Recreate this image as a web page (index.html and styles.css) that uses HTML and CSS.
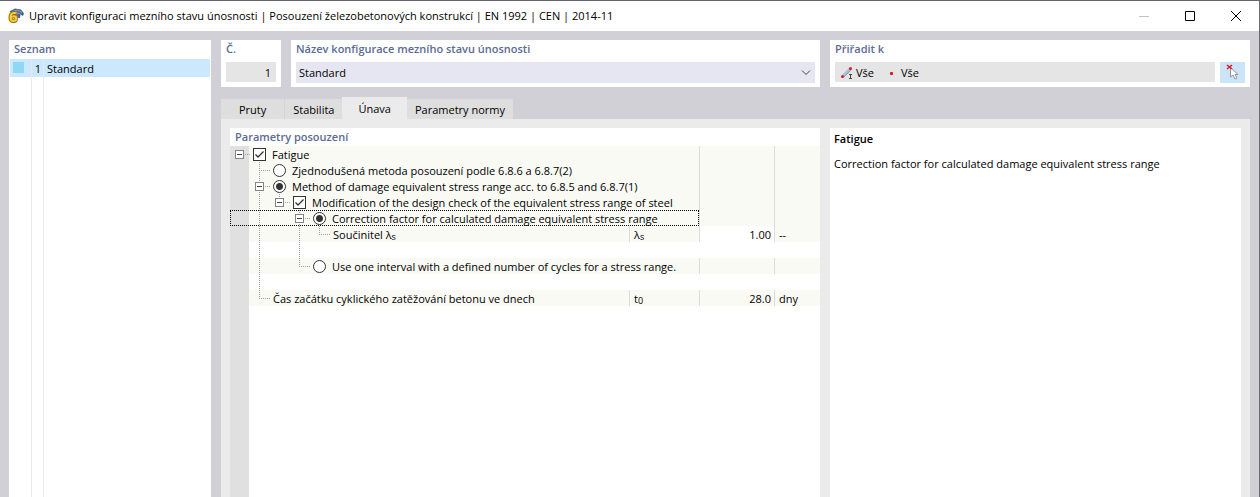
FILE: index.html
```
<!DOCTYPE html>
<html lang="cs">

<head>
    <meta charset="UTF-8">
    <meta name="viewport" content="width=device-width, initial-scale=1.0">
    <title>Upravit konfiguraci mezního stavu únosnosti</title>
    <link rel="stylesheet" href="styles.css">
</head>

<body>
    <header class="titlebar">
        <svg class="app-icon" width="16" height="16" viewBox="0 0 16 16" aria-hidden="true">
            <path d="M1.500 3.500L7 0.500L13 1.500L16 5.500L15 8L12.500 6.500L12 10H9.500L8.500 5L4 5.500Z" fill="#456590" />
            <path d="M4 4L9 2L14 4.500M9 5L12.500 6" fill="none" stroke="#8fa9cc" />
            <text x="1" y="14" class="app-six">6</text>
        </svg>
        <h1>Upravit konfiguraci mezního stavu únosnosti | Posouzení železobetonových konstrukcí | EN 1992 | CEN | 2014-11</h1>
        <div class="window-buttons">
            <button type="button" aria-label="Minimalizovat" disabled>
                <svg width="10" height="10" viewBox="0 0 10 10"><path d="M0 5.5H10" stroke="#c4c4c4" /></svg>
            </button>
            <button type="button" aria-label="Maximalizovat">
                <svg width="10" height="10" viewBox="0 0 10 10"><path d="M.5 .5H9.5V9.5H.5Z" fill="none" stroke="#000" /></svg>
            </button>
            <button type="button" aria-label="Zavřít">
                <svg width="10" height="10" viewBox="0 0 10 10"><path d="M0 0L10 10M10 0L0 10" stroke="#000" /></svg>
            </button>
        </div>
    </header>

    <div class="dialog">
        <aside class="panel list-panel">
            <h2>Seznam</h2>
            <ul class="list">
                <li class="selected">
                    <span class="list-color"><span class="swatch"></span></span>
                    <span class="list-no">1</span>
                    <span class="list-name">Standard</span>
                </li>
            </ul>
        </aside>

        <main>
            <div class="top">
                <section class="panel">
                    <h2><label for="no">Č.</label></h2>
                    <div class="fields">
                        <input type="text" id="no" class="field number" value="1" readonly>
                    </div>
                </section>
                <section class="panel">
                    <h2><label for="name">Název konfigurace mezního stavu únosnosti</label></h2>
                    <div class="fields">
                        <select id="name" class="field combo">
                            <option>Standard</option>
                        </select>
                    </div>
                </section>
                <section class="panel">
                    <h2>Přiřadit k</h2>
                    <div class="fields">
                        <div class="field assigned">
                            <svg width="12" height="12" viewBox="0 0 12 12" aria-hidden="true">
                                <path d="M2 9L9 2" stroke="#a9c0de" stroke-width="3" />
                                <path d="M3 10L10 3" stroke="#8496b0" stroke-width="1" />
                                <circle cx="1.5" cy="9.5" r="1.5" fill="#d8181e" />
                                <circle cx="9.5" cy="1.5" r="1.5" fill="#d8181e" />
                                <path d="M8 7.5H11M9.5 7V11M8 11.5H11" stroke="#444" />
                            </svg>
                            <span>Vše</span>
                            <span class="node"></span>
                            <span>Vše</span>
                        </div>
                        <button type="button" class="pick" aria-label="Vybrat v grafice">
                            <svg width="14" height="16" viewBox="0 0 14 16">
                                <path d="M4.500 3.500V13L7 11L9 15L11 14L9 10.500H12Z" fill="#fff" stroke="#8d959d" />
                                <path d="M1 1L6 5M6 1L1 5" stroke="#e0181e" stroke-width="1.500" />
                            </svg>
                        </button>
                    </div>
                </section>
            </div>

            <div class="tabs" role="tablist">
                <button type="button" role="tab">Pruty</button>
                <button type="button" role="tab">Stabilita</button>
                <button type="button" role="tab" class="active" aria-selected="true">Únava</button>
                <button type="button" role="tab">Parametry normy</button>
            </div>

            <div class="page">
                <section class="panel params">
                    <h2>Parametry posouzení</h2>
                    <div class="tree">
                        <table>
                            <colgroup>
                                <col>
                                <col class="col-symbol">
                                <col class="col-value">
                                <col class="col-unit">
                            </colgroup>
                            <tr>
                                <td colspan="2">
                                    <div class="node-row">
                                        <span class="guide side"><button type="button" class="toggle" aria-label="Sbalit"></button></span>
                                        <input type="checkbox" id="fatigue" checked>
                                        <label for="fatigue">Fatigue</label>
                                    </div>
                                </td>
                                <td></td>
                                <td></td>
                            </tr>
                            <tr>
                                <td colspan="2">
                                    <div class="node-row">
                                        <span class="guide"></span>
                                        <span class="guide down side"></span>
                                        <input type="radio" name="method" id="simple">
                                        <label for="simple">Zjednodušená metoda posouzení podle 6.8.6 a 6.8.7(2)</label>
                                    </div>
                                </td>
                                <td></td>
                                <td></td>
                            </tr>
                            <tr>
                                <td colspan="2">
                                    <div class="node-row">
                                        <span class="guide"></span>
                                        <span class="guide down side"><button type="button" class="toggle" aria-label="Sbalit"></button></span>
                                        <input type="radio" name="method" id="damage" checked>
                                        <label for="damage">Method of damage equivalent stress range acc. to 6.8.5 and 6.8.7(1)</label>
                                    </div>
                                </td>
                                <td></td>
                                <td></td>
                            </tr>
                            <tr>
                                <td colspan="2">
                                    <div class="node-row">
                                        <span class="guide"></span>
                                        <span class="guide down"></span>
                                        <span class="guide end side"><button type="button" class="toggle" aria-label="Sbalit"></button></span>
                                        <input type="checkbox" id="modify" checked>
                                        <label for="modify">Modification of the design check of the equivalent stress range of steel</label>
                                    </div>
                                </td>
                                <td></td>
                                <td></td>
                            </tr>
                            <tr class="current">
                                <td colspan="2">
                                    <div class="node-row">
                                        <span class="guide"></span>
                                        <span class="guide down"></span>
                                        <span class="guide"></span>
                                        <span class="guide down side"><button type="button" class="toggle" aria-label="Sbalit"></button></span>
                                        <input type="radio" name="range" id="factor" checked>
                                        <label for="factor">Correction factor for calculated damage equivalent stress range</label>
                                    </div>
                                </td>
                                <td></td>
                                <td></td>
                            </tr>
                            <tr>
                                <td>
                                    <div class="node-row">
                                        <span class="guide"></span>
                                        <span class="guide down"></span>
                                        <span class="guide"></span>
                                        <span class="guide down"></span>
                                        <span class="guide end side"></span>
                                        <label for="lambda">Součinitel λ<sub>s</sub></label>
                                    </div>
                                </td>
                                <td class="symbol">λ<sub>s</sub></td>
                                <td class="editable"><input type="text" id="lambda" value="1.00"></td>
                                <td class="unit">--</td>
                            </tr>
                            <tr class="blank">
                                <td colspan="4">
                                    <div class="node-row">
                                        <span class="guide"></span>
                                        <span class="guide down"></span>
                                        <span class="guide"></span>
                                        <span class="guide down"></span>
                                    </div>
                                </td>
                            </tr>
                            <tr>
                                <td colspan="2">
                                    <div class="node-row">
                                        <span class="guide"></span>
                                        <span class="guide down"></span>
                                        <span class="guide"></span>
                                        <span class="guide end side"></span>
                                        <input type="radio" name="range" id="interval">
                                        <label for="interval">Use one interval with a defined number of cycles for a stress range.</label>
                                    </div>
                                </td>
                                <td></td>
                                <td></td>
                            </tr>
                            <tr class="blank">
                                <td colspan="4">
                                    <div class="node-row">
                                        <span class="guide"></span>
                                        <span class="guide down"></span>
                                    </div>
                                </td>
                            </tr>
                            <tr>
                                <td>
                                    <div class="node-row">
                                        <span class="guide"></span>
                                        <span class="guide end side"></span>
                                        <label for="start">Čas začátku cyklického zatěžování betonu ve dnech</label>
                                    </div>
                                </td>
                                <td class="symbol">t<sub>0</sub></td>
                                <td><input type="text" id="start" value="28.0"></td>
                                <td class="unit">dny</td>
                            </tr>
                        </table>
                    </div>
                </section>

                <section class="panel info">
                    <h3>Fatigue</h3>
                    <p>Correction factor for calculated damage equivalent stress range</p>
                </section>
            </div>
        </main>
    </div>
</body>

</html>
```
FILE: styles.css
```
* {
    box-sizing: border-box;
}

body {
    display: flex;
    flex-direction: column;
    min-height: 100vh;
    margin: 0;
    border-top: 1px solid #66646a;
    border-right: 1px solid #6c6b70;
    background-color: #d1d0d6;
    color: #000;
    font: 11px/16px "Open Sans", "Noto Sans", sans-serif;
}

h1,
h2,
h3,
p,
ul {
    margin: 0;
    padding: 0;
}

button,
input,
select {
    margin: 0;
    padding: 0;
    border: 0;
    border-radius: 0;
    background: none;
    color: inherit;
    font: inherit;
}

/* title bar */
.titlebar {
    display: flex;
    align-items: center;
    height: 30px;
    padding-left: 8px;
    background-color: #fff;
}

.app-icon {
    margin-right: 5px;
    overflow: visible;
}

.app-six {
    fill: #f6cf3a;
    stroke: #8f701c;
    stroke-width: 2px;
    paint-order: stroke;
    font: bold 15px "Open Sans", sans-serif;
}

.titlebar h1 {
    font-size: 11px;
    font-weight: normal;
}

.window-buttons {
    display: flex;
    margin-left: auto;
}

.window-buttons button {
    display: flex;
    align-items: center;
    justify-content: center;
    width: 46px;
    height: 30px;
}

/* layout */
.dialog {
    display: flex;
    flex: 1;
    gap: 10px;
    padding: 9px 9px 0;
}

main {
    display: flex;
    flex: 1;
    flex-direction: column;
}

.panel {
    background-color: #fff;
}

.panel h2 {
    height: 19px;
    padding: 1px 5px 0;
    color: #5b6b93;
    font-size: 11px;
    font-weight: 600;
}

/* list on the left */
.list-panel {
    display: flex;
    flex-direction: column;
    width: 202px;
}

.list {
    flex: 1;
    margin: 0 1px;
    list-style: none;
    background: linear-gradient(#e9e9ec, #e9e9ec) 21px 0 / 1px 100% no-repeat, linear-gradient(#e9e9ec, #e9e9ec) 33px 0 / 1px 100% no-repeat;
}

.list li {
    display: flex;
    height: 18px;
    line-height: 20px;
}

.list .selected {
    background-color: #cce8ff;
}

.list-color {
    width: 22px;
    padding: 3px;
    border-right: 1px solid #e9e9ec;
}

.swatch {
    display: block;
    width: 11px;
    height: 11px;
    background-color: #8ed8f5;
}

.list-no {
    width: 12px;
    padding-right: 2px;
    border-right: 1px solid #e9e9ec;
    text-align: right;
}

.list-name {
    padding-left: 3px;
}

/* number, name, assignment */
.top {
    display: grid;
    grid-template-columns: 60px 529fr 420fr;
    gap: 10px;
}

.top .panel {
    height: 47px;
}

.fields {
    display: flex;
    gap: 5px;
    padding: 3px 5px 0;
}

.field {
    flex: 1;
    min-width: 0;
    height: 20px;
    background-color: #e5e5e5;
}

.number {
    padding-right: 5px;
    text-align: right;
}

.combo {
    height: 21px;
    padding: 0 3px;
    appearance: none;
    background: #e6e6f2 url("data:image/svg+xml,%3Csvg xmlns='http://www.w3.org/2000/svg' width='10' height='6'%3E%3Cpath d='M1 .5L5 4.500L9 .5' fill='none' stroke='%23444'/%3E%3C/svg%3E") right 4px center no-repeat;
}

.assigned {
    display: flex;
    align-items: center;
    gap: 3px;
    padding: 2px 6px 0;
}

.node {
    width: 3px;
    height: 3px;
    margin: 0 5px 0 13px;
    border-radius: 1px;
    background-color: #d8181e;
}

.pick {
    display: flex;
    justify-content: center;
    width: 25px;
    height: 21px;
    padding-top: 2px;
    background-color: #cce4f7;
}

/* tabs */
.tabs {
    display: flex;
    align-items: flex-end;
    margin-top: 10px;
}

.tabs button {
    height: 20px;
    padding: 2px 8px 0;
    background-color: #dedede;
}

.tabs button:first-child {
    padding: 2px 18px 0;
    border-right: 1px solid #d4d4d6;
}

.tabs .active {
    height: 22px;
    padding: 2px 16px 0;
    background-color: #ebebeb;
}

.page {
    display: grid;
    flex: 1;
    grid-template-columns: 590fr 411fr;
    gap: 10px;
    padding: 9px 9px 0;
    background-color: #ebebeb;
}

/* parameter tree */
.params {
    display: flex;
    flex-direction: column;
}

.params h2 {
    height: 18px;
}

.tree {
    flex: 1;
    background: linear-gradient(to right, #e0e0e0 19px, #fff 19px);
}

.tree table {
    width: 100%;
    border-collapse: collapse;
    table-layout: fixed;
}

.col-symbol {
    width: 70px;
}

.col-value {
    width: 75px;
}

.col-unit {
    width: 46px;
}

.tree td {
    height: 16px;
    padding: 0;
    background-color: #fafaf5;
    box-shadow: inset 1px 0 #dcdcdc;
    white-space: nowrap;
}

.tree td:first-child {
    background: linear-gradient(to right, #e0e0e0 19px, #fafaf5 19px);
    box-shadow: none;
}

.tree .blank td:first-child {
    background: none;
}

.tree td.editable {
    background-color: #fff;
}

.tree td.symbol,
.tree td.unit {
    padding: 2px 0 0 5px;
    line-height: 14px;
}

.tree td input[type="text"] {
    display: block;
    width: 100%;
    height: 16px;
    padding: 2px 3px 0 0;
    text-align: right;
}

.current td:first-child {
    outline: 1px dotted #000;
    outline-offset: -1px;
}

.node-row {
    display: flex;
    align-items: center;
    height: 16px;
}

.node-row label {
    padding: 2px 0 0 3px;
    line-height: 14px;
}

.node-row input + label {
    padding-left: 6px;
}

sub {
    font-size: 9px;
    line-height: 0;
    vertical-align: -1px;
}

/* dotted connectors, one 20px cell for each level */
.guide {
    position: relative;
    width: 20px;
    height: 16px;
}

.guide.down::before,
.guide.end::before {
    content: "";
    position: absolute;
    top: 0;
    left: 9px;
    width: 1px;
    height: 16px;
    background: repeating-linear-gradient(#a0a0a0 0 1px, transparent 1px 2px);
}

.guide.end::before {
    height: 9px;
}

.guide.side::after {
    content: "";
    position: absolute;
    top: 8px;
    left: 10px;
    width: 10px;
    height: 1px;
    background: repeating-linear-gradient(to right, transparent 0 1px, #a0a0a0 1px 2px);
}

.toggle {
    position: absolute;
    z-index: 1;
    top: 4px;
    left: 5px;
    width: 9px;
    height: 9px;
    border: 1px solid #858585;
    background: linear-gradient(#444, #444) center / 5px 1px no-repeat #fff;
}

.tree input[type="checkbox"],
.tree input[type="radio"] {
    width: 13px;
    height: 13px;
    margin-left: 3px;
    appearance: none;
    border: 1px solid #333;
    background-color: #fff;
}

.tree input[type="checkbox"]:checked {
    background-image: url("data:image/svg+xml,%3Csvg xmlns='http://www.w3.org/2000/svg' width='11' height='11'%3E%3Cpath d='M1.500 5.500L4 8L9.500 2.500' fill='none' stroke='%23333' stroke-width='1.300'/%3E%3C/svg%3E");
}

.tree input[type="radio"] {
    border-radius: 50%;
}

.tree input[type="radio"]:checked {
    background-image: radial-gradient(circle, #333 3px, transparent 4px);
}

/* description */
.info {
    padding: 3px 4px;
}

.info h3 {
    margin-bottom: 9px;
    font-size: 11px;
    font-weight: 600;
}
```
